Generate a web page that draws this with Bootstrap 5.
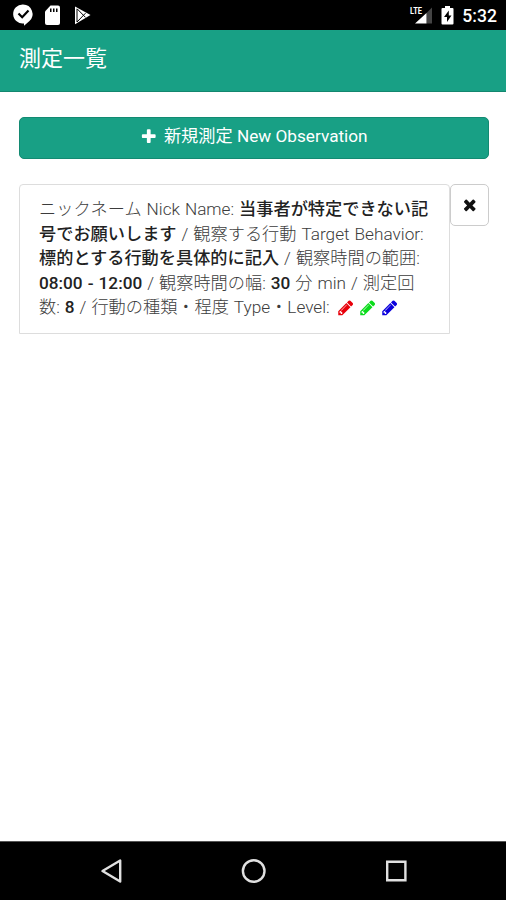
<!DOCTYPE html>
<html lang="ja">
<head>
<meta charset="utf-8">
<meta name="viewport" content="width=device-width, initial-scale=1">
<title>測定一覧</title>
<link href="https://cdn.jsdelivr.net/npm/bootstrap@5.3.0/dist/css/bootstrap.min.css" rel="stylesheet">
<style>
body{font-family:Roboto,"Noto Sans CJK JP",sans-serif;font-size:17.2px;line-height:24.5px;color:#666}
svg{display:block;flex:none}
.status-bar{height:30px;background:#000}
.status-bar .clock{font-size:17.6px;font-weight:500;line-height:32px;padding-right:9px}
.app-header{height:62px;background:#18a085;border-bottom:1px solid #13876f;padding:0 19px 2px;font-size:22px}
.page-main{padding:25px 17px 0 19px}
.btn-new{height:42px;background:#18a085;border:1px solid #138a72;border-radius:5px;color:#fff;font-size:17.2px;padding:0 0 2px;gap:6px}
.btn-new:hover{background:#138a72;color:#fff}
.obs-row{margin-top:24.5px}
.obs-card{width:431px;height:150px;border:1px solid #ddd;border-radius:4px 4px 0 0;padding:12.5px 0 0 19px;font-weight:300;color:#3c3c3c;word-spacing:.8px}
.obs-card b{font-weight:500;color:#222}
.obs-card svg{display:inline-block;vertical-align:-3px;margin-right:4.6px}
.obs-card svg:first-of-type{margin-left:2px}
.btn-del{width:40px;height:42px;border:1px solid #ccc;border-radius:5px;background:#fff;color:#111}
.nav-keys{height:59px;background:#000;border-top:1px solid #555}
</style>
<script src="https://cdn.jsdelivr.net/npm/bootstrap@5.3.0/dist/js/bootstrap.bundle.min.js"></script>
</head>
<body class="d-flex flex-column vh-100 bg-white overflow-hidden">
<svg class="d-none">
<symbol id="pencil" viewBox="0 0 1792 1792"><path d="M491 1536l91-91-235-235-91 91v107h128v128h107zm523-928q0-22-22-22-10 0-17 7l-542 542q-7 7-7 17 0 22 22 22 10 0 17-7l542-542q7-7 7-17zm-54-192l416 416-832 832h-416v-416zm683 96q0 53-37 90l-166 166-416-416 166-165q36-38 90-38 53 0 91 38l235 234q37 39 37 91z"/></symbol>
</svg>
<div class="status-bar d-flex justify-content-between flex-shrink-0 text-white">
<svg width="100" height="30" fill="#fff"><path d="M23 4.500a9.500 9.500 0 0 1 6.200 16.700L24 25.800V23.400A9.500 9.500 0 1 1 23 4.500z"/><path d="M18.500 13.500l3.700 3.700 6.300-6.600" fill="none" stroke="#000" stroke-width="2.200"/><path d="M50.500 5.500H58q2 0 2 2V23q0 2-2 2H47q-2 0-2-2V11.500z"/><path d="M50 8.500h1.500v3.500H50zm3 0h1.500v3.500H53zm3 0h1.500v3.500H56z" fill="#000"/><path d="M75 6.500L90.500 15 75 24.200z"/><path d="M77 8.700l8.500 8.700M77 22l8.500-8.800M77 9v13" fill="none" stroke="#000" stroke-width="1"/></svg>
<div class="d-flex">
<svg width="55" height="30" fill="#fff"><text x="3" y="13.500" font-family="Roboto" font-size="9.500" font-weight="700" textLength="12" lengthAdjust="spacingAndGlyphs">LTE</text><path d="M19.500 13l5.500-5.500V23.500h-5.500z" fill="#444"/><path d="M19.500 13V23.500H8zM35.500 8H38V6h5v2h2.500q1 0 1 1v14.500q0 1-1 1h-10q-1 0-1-1V9q0-1 1-1z"/><path d="M41.800 10.500L37 17h3v5l4.500-6.500h-2.700z" fill="#000"/></svg>
<span class="clock">5:32</span>
</div>
</div>
<header class="app-header d-flex align-items-center flex-shrink-0 text-white">測定一覧</header>
<main class="page-main flex-grow-1">
<button class="btn btn-new w-100 d-flex align-items-center justify-content-center"><svg width="17.500" height="17.500" viewBox="0 0 1792 1792" fill="#fff"><path d="M1600 736v192q0 40-28 68t-68 28h-416v416q0 40-28 68t-68 28h-192q-40 0-68-28t-28-68v-416h-416q-40 0-68-28t-28-68v-192q0-40 28-68t68-28h416v-416q0-40 28-68t68-28h192q40 0 68 28t28 68v416h416q40 0 68 28t28 68z"/></svg>新規測定 New Observation</button>
<div class="obs-row d-flex align-items-start">
<div class="obs-card flex-shrink-0">ニックネーム Nick Name: <b>当事者が特定できない記<br>号でお願いします</b> / 観察する行動 Target Behavior:<br><b>標的とする行動を具体的に記入</b> / 観察時間の範囲:<br><b>08:00 - 12:00</b> / 観察時間の幅: <b>30</b> 分 min / 測定回<br>数: <b>8</b> / 行動の種類・程度 Type・Level: <svg width="17.500" height="17.500" fill="#e8000b"><use href="#pencil"/></svg><svg width="17.500" height="17.500" fill="#0bdc1c"><use href="#pencil"/></svg><svg width="17.500" height="17.500" fill="#0b00dc"><use href="#pencil"/></svg></div>
<button class="btn btn-del p-0 d-flex align-items-center justify-content-center" aria-label="削除"><svg width="17.500" height="17.500" viewBox="0 0 1792 1792" fill="#111"><path d="M1490 1322q0 40-28 68l-136 136q-28 28-68 28t-68-28l-294-294-294 294q-28 28-68 28t-68-28l-136-136q-28-28-28-68t28-68l294-294-294-294q-28-28-28-68t28-68l136-136q28-28 68-28t68 28l294 294 294-294q28-28 68-28t68 28l136 136q28 28 28 68t-28 68l-294 294 294 294q28 28 28 68z"/></svg></button>
</div>
</main>
<nav class="nav-keys d-flex justify-content-center flex-shrink-0">
<svg width="506" height="58" fill="none" stroke="#e0e0e0" stroke-width="2.400"><path d="M102.500 29l17.700-10.500v21z" stroke-linejoin="round"/><circle cx="253.700" cy="29" r="10.800"/><path d="M387.200 19.700h18.200v18.600h-18.200z"/></svg>
</nav>
</body>
</html>
